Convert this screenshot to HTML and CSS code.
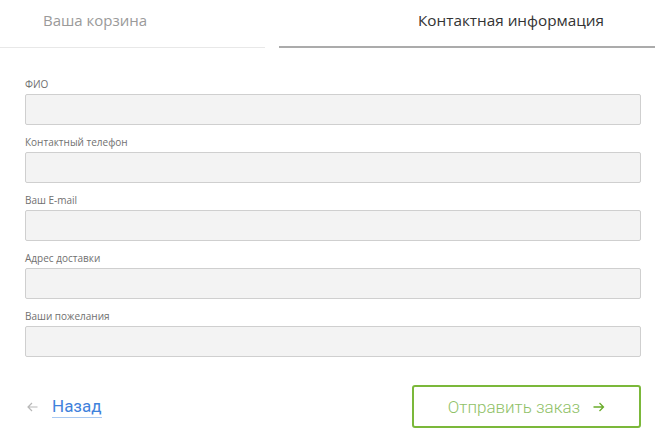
FILE: index.html
```html
<!DOCTYPE html>
<html lang="ru">
<head>
<meta charset="utf-8">
<link rel="stylesheet" href="styles.css">
</head>
<body>
<div class="page">
  <div class="tabs">
    <div class="tab tab-cart">Ваша корзина</div>
    <div class="tab tab-contact active">Контактная информация</div>
  </div>
  <form class="form">
    <div class="field">
      <label class="label">ФИО</label>
      <input class="input" type="text">
    </div>
    <div class="field">
      <label class="label">Контактный телефон</label>
      <input class="input" type="text">
    </div>
    <div class="field">
      <label class="label">Ваш E-mail</label>
      <input class="input" type="text">
    </div>
    <div class="field">
      <label class="label">Адрес доставки</label>
      <input class="input" type="text">
    </div>
    <div class="field">
      <label class="label">Ваши пожелания</label>
      <input class="input" type="text">
    </div>
    <div class="actions">
      <a class="back">
        <svg class="back-arrow" width="11" height="10" viewBox="0 0 11 10"><path d="M10.5 5H1M5 1L1 5l4 4" fill="none" stroke="#b8b8b8" stroke-width="1.2"/></svg>
        <span class="back-text">Назад</span>
      </a>
      <button class="submit" type="button">Отправить заказ<svg class="submit-arrow" width="12" height="10" viewBox="0 0 12 10"><path d="M0.5 5H10.5M6.5 1l4 4-4 4" fill="none" stroke="#6aac2a" stroke-width="1.3"/></svg></button>
    </div>
  </form>
</div>
</body>
</html>
```
FILE: styles.css
```css
* { box-sizing: border-box; }
html, body { margin: 0; padding: 0; background: #fff; }
body { font-family: "Open Sans", "Noto Sans", sans-serif; width: 655px; height: 437px; overflow: hidden; }

.tabs { display: flex; gap: 14px; height: 48px; }
.tab {
  font-size: 15px;
  line-height: 22px;
  padding-top: 9px;
  color: #9a9a9a;
  font-weight: 400;
}
.tab-cart { width: 265px; padding-left: 43px; border-bottom: 1px solid #e8e8e8; }
.tab-contact { flex: 1; padding-left: 139px; color: #333; border-bottom: 2px solid #ababab; font-size: 15.3px; }

.form { padding: 29px 14px 0 25px; }
.field { margin-bottom: 10px; }
.label {
  display: block;
  font-size: 10px;
  line-height: 14px;
  color: #707070;
  margin-bottom: 3px;
}
.input {
  display: block;
  width: 100%;
  height: 31px;
  background: #f3f3f3;
  border: 1px solid #cfcfcf;
  border-radius: 2px;
  margin: 0;
  padding: 0 8px;
}

.actions {
  display: flex;
  justify-content: space-between;
  align-items: center;
  margin-top: 28px;
}
.back {
  display: flex;
  align-items: center;
  font-family: Roboto, "Open Sans", sans-serif;
  text-decoration: none;
  padding-left: 2px;
}
.back-arrow { display: block; margin-right: 14px; }
.back-text {
  color: #3f82dc;
  font-size: 17px;
  line-height: 21px;
  border-bottom: 1px solid #a9c9f2;
}
.submit {
  width: 229px;
  height: 43px;
  border: 2px solid #7bb83a;
  border-radius: 3px;
  background: #fff;
  color: #8fc167;
  font-family: Roboto, "Open Sans", sans-serif;
  font-size: 17px;
  font-weight: 300;
  padding: 0;
  display: flex;
  align-items: center;
  justify-content: center;
}
.submit-arrow { display: block; margin-left: 13px; }
```
